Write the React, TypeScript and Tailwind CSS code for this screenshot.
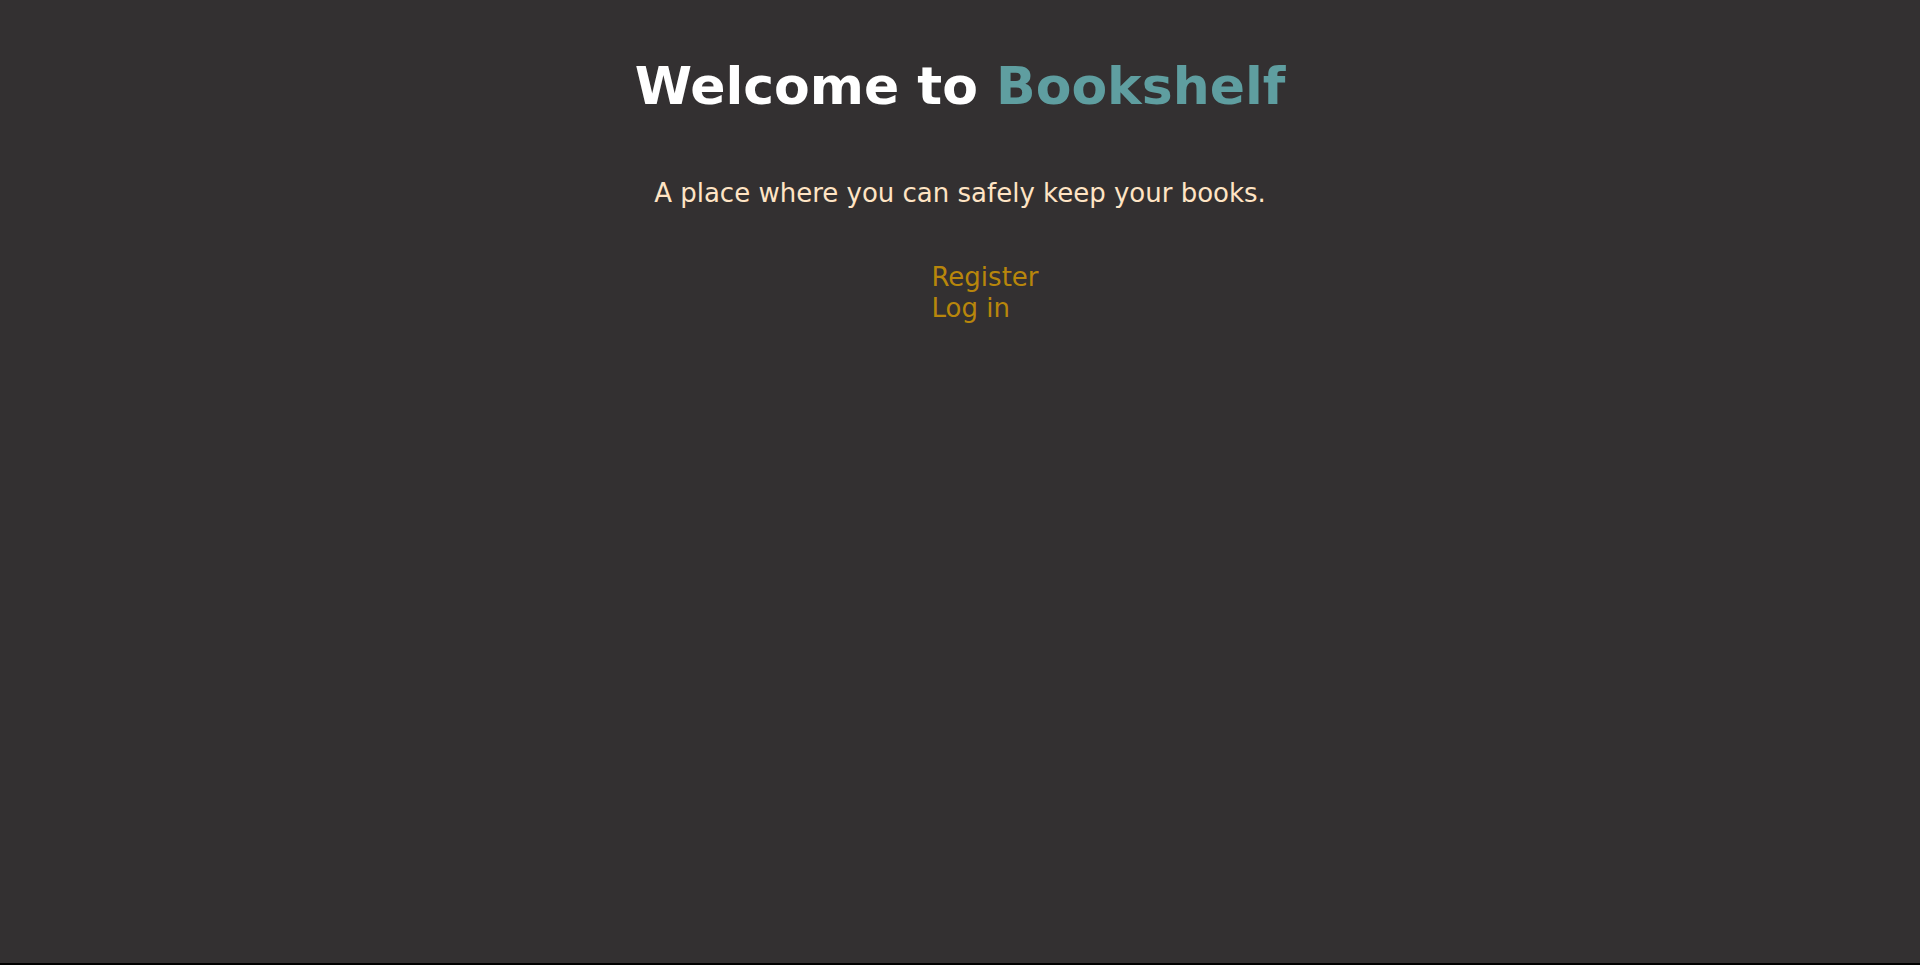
export default function App() {
  return (
    <div className="h-[965px] w-full bg-black overflow-hidden">
      <div className="h-[963px] w-full bg-[#333031] flex flex-col items-center" style={{ fontFamily: '"DejaVu Sans", Verdana, sans-serif' }}>
        <h1 className="mt-[51px] text-[52px] leading-[70px] font-bold text-white whitespace-nowrap">
          Welcome to <span className="text-[#5f9ea0]">Bookshelf</span>
        </h1>
        <p className="mt-[57px] text-[26px] leading-[30px] text-[#ffe4c4] whitespace-nowrap">A place where you can safely keep your books.</p>
        <ul className="mt-[54px] pl-[50px] text-[26px] leading-[31px] text-[#b8860b]">
          <li>Register</li>
          <li>Log in</li>
        </ul>
      </div>
    </div>
  );
}
